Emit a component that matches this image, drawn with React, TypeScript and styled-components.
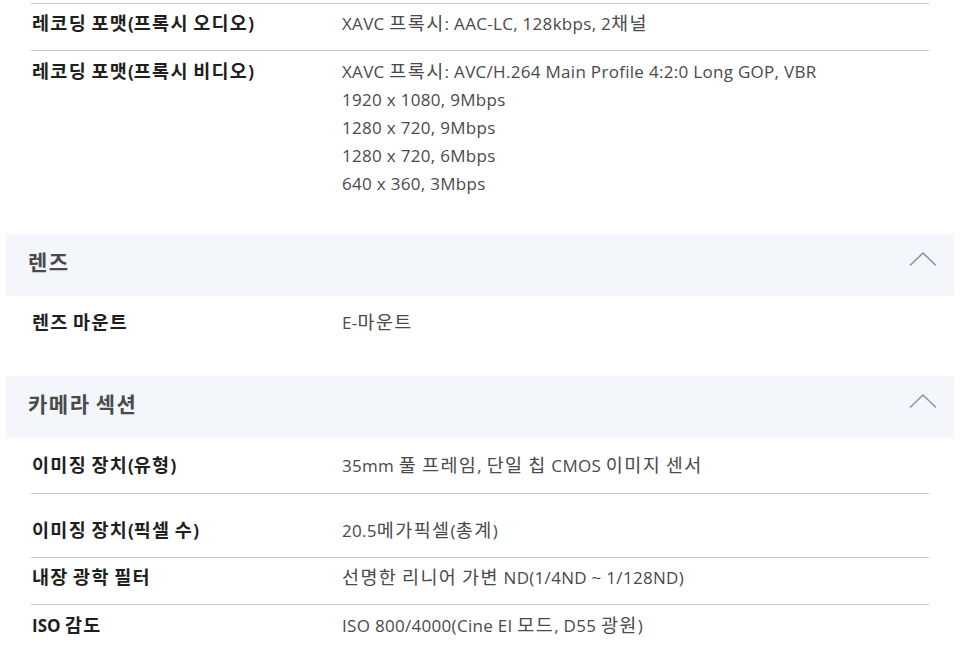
import React from "react";
import styled, { createGlobalStyle } from "styled-components";

const GlobalStyle = createGlobalStyle`
  html, body {
    margin: 0;
    padding: 0;
    background: #ffffff;
  }
  body {
    font-family: "Open Sans", "Noto Sans CJK KR", sans-serif;
    color: #333;
  }
`;

// Hangul runs get their own size/tracking (the reference font sets them larger)
const Ko = styled.span`
  line-height: 18px;
`;

const Page = styled.div`
  width: 948px;
  padding: 3px 8px 0 6px;
`;

const Group = styled.div`
  padding: 0 25px;
`;

const Row = styled.div<{ top?: number; bottom?: number; line?: boolean; first?: boolean }>`
  display: grid;
  grid-template-columns: 310px 1fr;
  padding: ${(p) => p.top ?? 7}px 0 ${(p) => p.bottom ?? 12}px 1px;
  border-bottom: ${(p) => (p.line ? "1px solid #c8c8c8" : "none")};
  border-top: ${(p) => (p.first ? "1px solid #c8c8c8" : "none")};
  line-height: 28px;
`;

const Label = styled.div`
  font-size: 17px;
  font-weight: 700;
  color: #1f1f1f;

  ${Ko} {
    font-size: 18.5px;
    letter-spacing: 1.3px;
  }
`;

const Value = styled.div`
  font-size: 17px;
  font-weight: 400;
  letter-spacing: 0.3px;
  color: #4a4a4a;

  ${Ko} {
    font-size: 18.5px;
    letter-spacing: 1.4px;
  }
`;

const SectionHeader = styled.div`
  height: 56px;
  padding: 0 17px 6px 22px;
  background: #f3f6fa;
  display: flex;
  align-items: center;
  justify-content: space-between;
`;

const SectionTitle = styled.h3`
  margin: 0;
  font-size: 20px;
  font-weight: 700;
  color: #4a4a4a;

  ${Ko} {
    font-size: 21px;
    letter-spacing: 1.5px;
  }
`;

const ToggleIcon = styled.svg`
  display: block;
  margin-bottom: 6px;
`;

const Chevron = () => (
  <ToggleIcon width="28" height="16" viewBox="0 0 28 16" fill="none">
    <polyline points="1,14.5 14,2 27,14.5" stroke="#8d949c" strokeWidth="1.6" />
  </ToggleIcon>
);

function Text({ children }: { children: string }) {
  const parts = children.split(/([\uAC00-\uD7A3]+)/);
  return (
    <>
      {parts.map((p, i) => (i % 2 === 1 ? <Ko key={i}>{p}</Ko> : p))}
    </>
  );
}

type Spec = {
  label: string;
  lines: string[];
  top?: number;
  bottom?: number;
  line?: boolean;
  first?: boolean;
};

const videoLines = [
  "XAVC 프록시: AVC/H.264 Main Profile 4:2:0 Long GOP, VBR",
  "1920 x 1080, 9Mbps",
  "1280 x 720, 9Mbps",
  "1280 x 720, 6Mbps",
  "640 x 360, 3Mbps",
];

const recording: Spec[] = [
  { label: "레코딩 포맷(프록시 오디오)", lines: ["XAVC 프록시: AAC-LC, 128kbps, 2채널"], top: 6, line: true, first: true },
  { label: "레코딩 포맷(프록시 비디오)", lines: videoLines, top: 7, bottom: 36 },
];

const lens: Spec[] = [{ label: "렌즈 마운트", lines: ["E-마운트"], top: 13, bottom: 39 }];

const camera: Spec[] = [
  { label: "이미징 장치(유형)", lines: ["35mm 풀 프레임, 단일 칩 CMOS 이미지 센서"], top: 14, bottom: 13, line: true },
  { label: "이미징 장치(픽셀 수)", lines: ["20.5메가픽셀(총계)"], top: 23, line: true },
  { label: "내장 광학 필터", lines: ["선명한 리니어 가변 ND(1/4ND ~ 1/128ND)"], top: 6, line: true },
  { label: "ISO 감도", lines: ["ISO 800/4000(Cine EI 모드, D55 광원)"], top: 7, bottom: 20 },
];

function Rows({ items }: { items: Spec[] }) {
  return (
    <Group>
      {items.map((s) => (
        <Row key={s.label} top={s.top} bottom={s.bottom} line={s.line} first={s.first}>
          <Label>
            <Text>{s.label}</Text>
          </Label>
          <Value>
            {s.lines.map((l) => (
              <div key={l}>
                <Text>{l}</Text>
              </div>
            ))}
          </Value>
        </Row>
      ))}
    </Group>
  );
}

export default function App() {
  return (
    <>
      <GlobalStyle />
      <Page>
        <Rows items={recording} />
        <SectionHeader>
          <SectionTitle>
            <Text>렌즈</Text>
          </SectionTitle>
          <Chevron />
        </SectionHeader>
        <Rows items={lens} />
        <SectionHeader>
          <SectionTitle>
            <Text>카메라 섹션</Text>
          </SectionTitle>
          <Chevron />
        </SectionHeader>
        <Rows items={camera} />
      </Page>
    </>
  );
}
